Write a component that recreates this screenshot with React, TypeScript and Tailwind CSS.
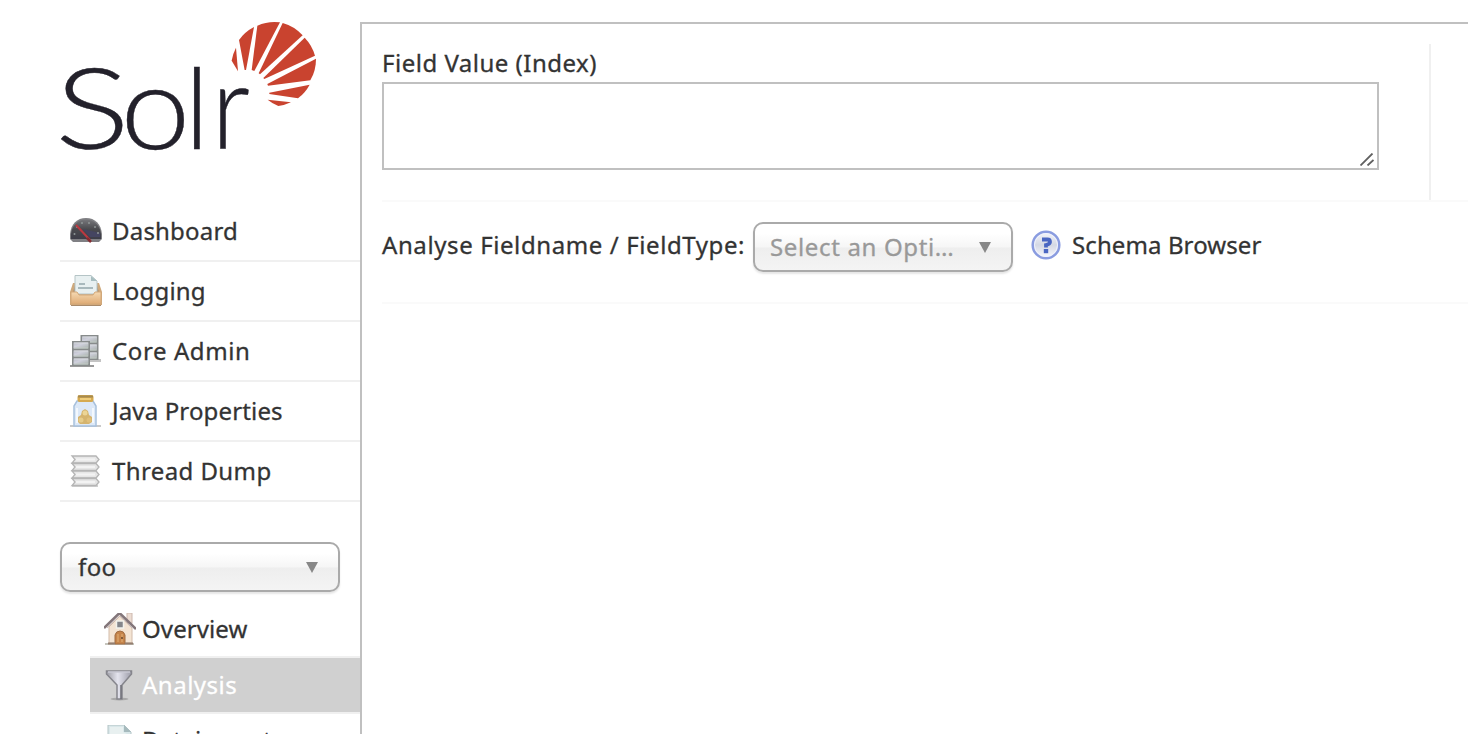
import React from "react";

function SolrLogo() {
  return (
    <svg className="block overflow-visible" width="260" height="170" viewBox="60 20 260 170" role="img" aria-label="Solr">
      <g
        fill="#23212b"
        stroke="#23212b"
        strokeWidth="0.4"
        fontFamily="Lato, 'Open Sans', sans-serif"
        fontWeight="300"
      >
        <text transform="translate(55 149) scale(1.25 1)" fontSize="112">S</text>
        <text transform="translate(120.500 149) scale(1.070 1)" fontSize="117">o</text>
        <text transform="translate(184.500 149)" fontSize="112">l</text>
        <text transform="translate(211.500 149) scale(0.920 1)" fontSize="118">r</text>
      </g>
      <g transform="translate(225 15) scale(0.3333)" fill="#c9432f">
        <path d="M33 98A126 126 0 0 0 20 137L39 169Z" />
        <path d="M42 75A126 126 0 0 1 87 36L63 165L59 165Z" />
        <path d="M97 32A126 126 0 0 1 165 22L88 168L80 165Z" />
        <path d="M173 24A126 126 0 0 1 233 61L105 178L101 175Z" />
        <path d="M239 68A126 126 0 0 1 270 122L118 192L115 189Z" />
        <path d="M273 131A126 126 0 0 1 256 196L129 212L127 207Z" />
        <path d="M254 209A126 126 0 0 1 219 250L133 237L133 233Z" />
        <path d="M128 254L198 262A126 126 0 0 1 160 273A126 126 0 0 1 128 254Z" />
      </g>
    </svg>
  );
}

const iconProps = { width: 32, height: 32, viewBox: "0 0 32 32", className: "block shrink-0 blur-[0.4px]" };

function DashboardIcon() {
  return (
    <svg {...iconProps}>
      <defs>
        <linearGradient id="dash" x2="0" y2="1">
          <stop stopColor="#77777b" />
          <stop offset=".5" stopColor="#4a4a4e" />
          <stop offset="1" stopColor="#3d3d49" />
        </linearGradient>
      </defs>
      <path d="M0 24V19C1 9 7 3 16 3S31 9 32 19V24L29 27H3Z" fill="#808084" />
      <path d="M1 24V19C2 10 8 4.500 16 4.500S30 10 31 19V24Z" fill="url(#dash)" />
      <path d="M13 14L30 18V22H20Z" fill="#454561" />
      <g fill="#8f9696">
        <circle cx="4.500" cy="19" r="1" />
        <circle cx="7" cy="12" r="1" />
        <circle cx="12" cy="8" r="1" />
        <circle cx="19" cy="8" r="1" />
        <circle cx="25" cy="12" r="1" />
        <circle cx="28" cy="18" r="1" />
      </g>
      <path d="M6 10L20 25" stroke="#bd3840" strokeWidth="2" />
      <path d="M17 23L21 27" stroke="#862c32" strokeWidth="2.500" />
    </svg>
  );
}

function LoggingIcon() {
  return (
    <svg {...iconProps}>
      <defs>
        <linearGradient id="tray" x2="0" y2="1">
          <stop stopColor="#f5d9b2" />
          <stop offset="1" stopColor="#dfab75" />
        </linearGradient>
      </defs>
      <path d="M3 8H29L32 17V30H0V17Z" fill="#cfa97c" />
      <path d="M5 10H27L29 18H3Z" fill="#a98a68" />
      <path d="M5 0.500H21L27 6V19H5Z" fill="#e8f0f1" stroke="#b5c4c6" />
      <path d="M21 1V6H27Z" fill="#a8bec0" />
      <path d="M9 9H15M8 13H23" stroke="#a9b9bd" strokeWidth="2" />
      <path d="M1 17H7L9 20H23L25 17H31V29H1Z" fill="url(#tray)" stroke="#d4a878" />
      <path d="M1 30.500H31" stroke="#a98a6a" />
    </svg>
  );
}

function ServerBox({ x, y }: { x: number; y: number }) {
  return (
    <g>
      <rect x={x} y={y} width="18" height="25" fill="#878b8b" />
      {[0, 8, 16].map((d) => (
        <g key={d}>
          <rect x={x + 1.5} y={y + d + 1.5} width="15" height="6" fill="url(#server)" />
          <path d={`M${x + 2} ${y + d + 2}H${x + 16}`} stroke="#d8dbde" />
          <path d={`M${x + 2} ${y + d + 7}H${x + 16}`} stroke="#c2cbc5" />
        </g>
      ))}
    </g>
  );
}

function CoreIcon() {
  return (
    <svg {...iconProps}>
      <defs>
        <linearGradient id="server" x2="1" y2="1">
          <stop stopColor="#b9bbc7" />
          <stop offset=".4" stopColor="#cfd0dc" />
          <stop offset="1" stopColor="#a9b2ac" />
        </linearGradient>
      </defs>
      <path d="M13 24H31V27H13Z" fill="#c4c4c4" />
      <ServerBox x={10.5} y={0} />
      <path d="M0 30H24V32H0Z" fill="#999" />
      <ServerBox x={2} y={6} />
    </svg>
  );
}

function JarIcon() {
  return (
    <svg {...iconProps}>
      <path d="M0 30H31V32H0Z" fill="#c9c9c9" />
      <path d="M7 6H23L26 11V31H4V11Z" fill="#dce8f7" stroke="#a8c1dd" strokeWidth="1.500" />
      <path d="M7 13V28M23 13V28" stroke="#f3f8fd" strokeWidth="2" />
      <rect x="7.500" y="0" width="16" height="7" rx="2" fill="#d6aa50" />
      <path d="M8 1.500H23" stroke="#a68b50" strokeWidth="2" />
      <path d="M10 4H21" stroke="#f0cd7a" strokeWidth="2" />
      <path d="M8 22L11 20L12 16L15 14L18 16L19 20L22 22V27L19 29H10L8 27Z" fill="#d5b46e" />
      <circle cx="15" cy="18" r="2.500" fill="#ecd596" />
      <circle cx="11" cy="25" r="2.500" fill="#e6cc8a" />
      <circle cx="19" cy="25" r="2.500" fill="#e0bf7a" />
    </svg>
  );
}

function ThreadIcon() {
  return (
    <svg {...iconProps}>
      <path d="M2 30H28V32H2Z" fill="#d0d0d0" />
      <g fill="#e6e6e6" stroke="#b5b5b5" strokeWidth="1.300">
        <path d="M2 1H26L29 4.500L26 8H2L5 4.500Z" />
        <path d="M2 8.500H26L29 12L26 15.500H2L5 12Z" />
        <path d="M2 16H26L29 19.500L26 23H2L5 19.500Z" />
        <path d="M2 23.500H26L29 27L26 30.500H2L5 27Z" />
      </g>
      <path d="M6 4.500H25M6 12H25M6 19.500H25M6 27H25" stroke="#f3f3f3" strokeWidth="2" />
    </svg>
  );
}

function HouseIcon() {
  return (
    <svg {...iconProps}>
      <path d="M1 30H30V32H1Z" fill="#c5c5bd" />
      <rect x="23" y="0" width="5" height="10" fill="#ecdcd2" stroke="#cdb8ae" />
      <path d="M5 14L16 3L28 15V30H5Z" fill="#f4e4d3" stroke="#d3bcaa" />
      <path d="M0 15L15.500 0L32 16" fill="none" stroke="#83767a" strokeWidth="2.600" />
      <path d="M3 15L15.500 3L28 15" fill="none" stroke="#c9bab6" />
      <rect x="12.500" y="8" width="7" height="7" fill="#85868a" stroke="#f2f2ed" strokeWidth="1.500" />
      <path d="M11 31V22Q12 18 16 18T21 22V31Z" fill="#c6844a" stroke="#a06c42" />
      <path d="M14 21V29M18 21V29" stroke="#d9a269" strokeWidth="1.500" />
      <circle cx="18" cy="25" r="1" fill="#684429" />
      <path d="M4 30.500H11M21 30.500H29" stroke="#947e70" strokeWidth="2" />
    </svg>
  );
}

function FunnelIcon() {
  return (
    <svg {...iconProps}>
      <defs>
        <linearGradient id="funnel">
          <stop stopColor="#9c9ca4" />
          <stop offset=".45" stopColor="#e4e4ee" />
          <stop offset="1" stopColor="#9c9ca8" />
        </linearGradient>
      </defs>
      <ellipse cx="15.500" cy="30" rx="9" ry="1.500" fill="#a8a8a8" />
      <path d="M2.500 2H27.500V5L18 16V30H13V16L2.500 5Z" fill="url(#funnel)" stroke="#85858c" strokeWidth="1.500" />
      <path d="M4 3H26" stroke="#c9c9d3" strokeWidth="1.500" />
      <path d="M17 16V30" stroke="#6e6e76" strokeWidth="1.500" />
    </svg>
  );
}

function DocumentIcon() {
  return (
    <svg {...iconProps}>
      <path d="M4 0H20L27 7V32H4Z" fill="#d9e7e9" stroke="#b3c4c6" />
      <path d="M6 2H19V7L25 10V30H6Z" fill="#e8f0f0" />
      <path d="M20 0V7H27Z" fill="#a6babd" />
    </svg>
  );
}

function HelpIcon() {
  return (
    <svg {...iconProps}>
      <defs>
        <linearGradient id="help" x2="0" y2="1">
          <stop stopColor="#f5f6fb" />
          <stop offset=".5" stopColor="#d4d8e4" />
          <stop offset="1" stopColor="#fbfbff" />
        </linearGradient>
      </defs>
      <circle cx="16" cy="16" r="13.300" fill="url(#help)" stroke="#8a9ce0" strokeWidth="2.500" />
      <circle cx="16" cy="16" r="11.500" fill="none" stroke="#f0f3ff" />
      <path d="M12 10.500H17.500Q20 10.500 20 13Q20 15 16 16V18.500" fill="none" stroke="#4a66c2" strokeWidth="3.800" />
      <rect x="13.800" y="20" width="4.400" height="4.200" fill="#4a66c2" />
    </svg>
  );
}

function SelectBox({ label, className }: { label: React.ReactNode; className: string }) {
  return (
    <button
      type="button"
      className={`flex h-[50px] shrink-0 items-center justify-between rounded-[10px] border-2 border-[#aaaaaa] bg-linear-[to_bottom,#ffffff_20%,#f6f6f6_50%,#eeeeee_52%,#f4f4f4_100%] pr-5 shadow-[0_2px_2px_rgba(0,0,0,0.1)] ${className}`}
    >
      {label}
      <svg width="12" height="11" viewBox="0 0 12 11">
        <path d="M0 0H12L6 11Z" fill="#888888" />
      </svg>
    </button>
  );
}

const navItems = [
  { label: "Dashboard", icon: <DashboardIcon />, spacing: "tracking-[0.2px]" },
  { label: "Logging", icon: <LoggingIcon />, spacing: "tracking-[0.2px]" },
  { label: "Core Admin", icon: <CoreIcon />, spacing: "tracking-[0.6px]" },
  { label: "Java Properties", icon: <JarIcon />, spacing: "tracking-[0.15px]" },
  { label: "Thread Dump", icon: <ThreadIcon />, spacing: "tracking-[0.4px]" },
];

function Sidebar() {
  return (
    <aside className="flex w-[360px] shrink-0 flex-col pl-[60px] pt-5">
      <div className="h-[182px] shrink-0">
        <SolrLogo />
      </div>
      <nav>
        {navItems.map((item) => (
          <a key={item.label} className="flex h-[60px] items-center gap-[10px] border-b-2 border-[#f0f0f0] pl-[10px]">
            {item.icon}
            <span className={item.spacing}>{item.label}</span>
          </a>
        ))}
      </nav>
      <SelectBox label={<span className="tracking-[0.4px]">foo</span>} className="mt-10 w-[280px] pl-4" />
      <nav className="ml-[30px] mt-[10px] flex flex-col">
        <a className="flex h-14 shrink-0 items-center gap-[6px] border-b-2 border-[#f0f0f0] pl-[14px]">
          <HouseIcon />
          <span className="tracking-[0.1px]">Overview</span>
        </a>
        <a className="flex h-14 shrink-0 items-center gap-[6px] border-b-2 border-[#f0f0f0] bg-[#d0d0d0] bg-clip-padding pl-[14px] text-white">
          <FunnelIcon />
          <span className="tracking-[0.5px]">Analysis</span>
        </a>
        <a className="flex h-14 shrink-0 items-start gap-[6px] pl-[14px] pt-[11px]">
          <DocumentIcon />
          <span className="-mt-px">Dataimport</span>
        </a>
      </nav>
    </aside>
  );
}

export default function App() {
  return (
    <div className="flex h-[734px] w-[1468px] overflow-hidden bg-white font-['Noto_Sans','Open_Sans',sans-serif] text-2xl leading-8 whitespace-nowrap text-[#333333] [-webkit-text-stroke-width:0.3px]">
      <Sidebar />
      <main className="mt-[22px] flex min-w-0 grow flex-col border-l-2 border-t-2 border-[#c0c0c0] pl-5 pt-5">
        <section className="flex h-[158px] shrink-0 border-b-2 border-[#fafafa]">
          <div className="w-[1049px] shrink-0 border-r-2 border-[#f0f0f0]">
            <label className="block h-[38px] pt-[3px]">
              <span className="tracking-[0.5px]">Field Value (Index)</span>
            </label>
            <div className="flex h-[88px] w-[997px] items-end justify-end border-2 border-[#c0c0c0] pb-[2px] pr-[3px]">
              <svg width="14" height="13" viewBox="0 0 14 13" fill="none" stroke="#606060" strokeWidth="1.800">
                <path d="M0.500 12.500L12.500 0.500M7.500 12.500L13.500 7" />
              </svg>
            </div>
          </div>
        </section>
        <section className="flex h-[102px] shrink-0 items-start border-b-2 border-[#fafafa] pt-5">
          <span className="mt-[7px] w-[371px] shrink-0 tracking-[0.6px]">Analyse Fieldname / FieldType:</span>
          <SelectBox
            label={<span className="tracking-[0.65px] text-[#999999]">Select an Opti…</span>}
            className="w-[260px] pl-[15px]"
          />
          <a className="ml-[17px] mt-[7px] flex gap-[10px]">
            <HelpIcon />
            <span className="tracking-[0.1px]">Schema Browser</span>
          </a>
        </section>
      </main>
    </div>
  );
}
